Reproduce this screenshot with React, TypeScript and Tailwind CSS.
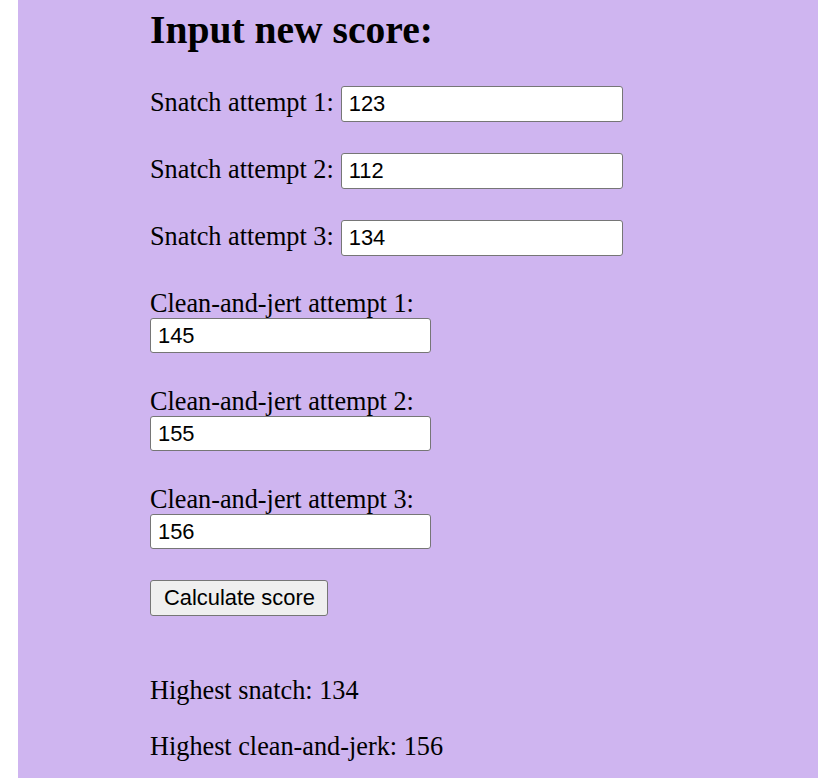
import React from "react";

const serif = { fontFamily: '"Liberation Serif", "Times New Roman", serif' };

function InlineRow({ label, value, className }: { label: string; value: string; className?: string }) {
  return (
    <div className={"flex items-baseline " + (className ?? "")}>
      <span className="text-[26.25px] leading-[30px] mr-[7px]">{label}</span>
      <input
        readOnly
        value={value}
        className="w-[282px] h-[36px] border border-[#767676] rounded-[3px] bg-white pl-[7px] text-[21.9px] text-black outline-none font-['Liberation_Sans',Arial,sans-serif]"
      />
    </div>
  );
}

function StackRow({ label, value, className }: { label: string; value: string; className?: string }) {
  return (
    <div className={className}>
      <div className="pt-[2px] text-[26.25px] leading-[30px]">{label}</div>
      <input
        readOnly
        value={value}
        className="block -mt-[1px] w-[281px] h-[35px] border border-[#767676] rounded-[3px] bg-white pl-[7px] text-[21.9px] text-black outline-none font-['Liberation_Sans',Arial,sans-serif]"
      />
    </div>
  );
}

export default function App() {
  return (
    <div className="min-h-[778px] bg-white">
      <div className="mx-[18px] w-[800px] min-h-[778px] bg-[#cfb5f0] pl-[132px] text-black" style={serif}>
        <h2 className="pt-[8px] text-[39.6px] font-bold leading-[45px]">Input new score:</h2>
        <InlineRow className="mt-[33px]" label="Snatch attempt 1:" value="123" />
        <InlineRow className="mt-[31px]" label="Snatch attempt 2:" value="112" />
        <InlineRow className="mt-[31px]" label="Snatch attempt 3:" value="134" />
        <StackRow className="mt-[31px]" label="Clean-and-jert attempt 1:" value="145" />
        <StackRow className="mt-[32px]" label="Clean-and-jert attempt 2:" value="155" />
        <StackRow className="mt-[32px]" label="Clean-and-jert attempt 3:" value="156" />
        <button className="mt-[31px] block h-[36px] w-[178px] border border-[#767676] rounded-[3px] bg-[#efefef] text-left pl-[13px] text-[21.9px] text-black font-['Liberation_Sans',Arial,sans-serif]">
          Calculate score
        </button>
        <p className="mt-[60px] text-[26.25px] leading-[30px]">Highest snatch: 134</p>
        <p className="mt-[26px] text-[26.25px] leading-[30px]">Highest clean-and-jerk: 156</p>
      </div>
    </div>
  );
}
